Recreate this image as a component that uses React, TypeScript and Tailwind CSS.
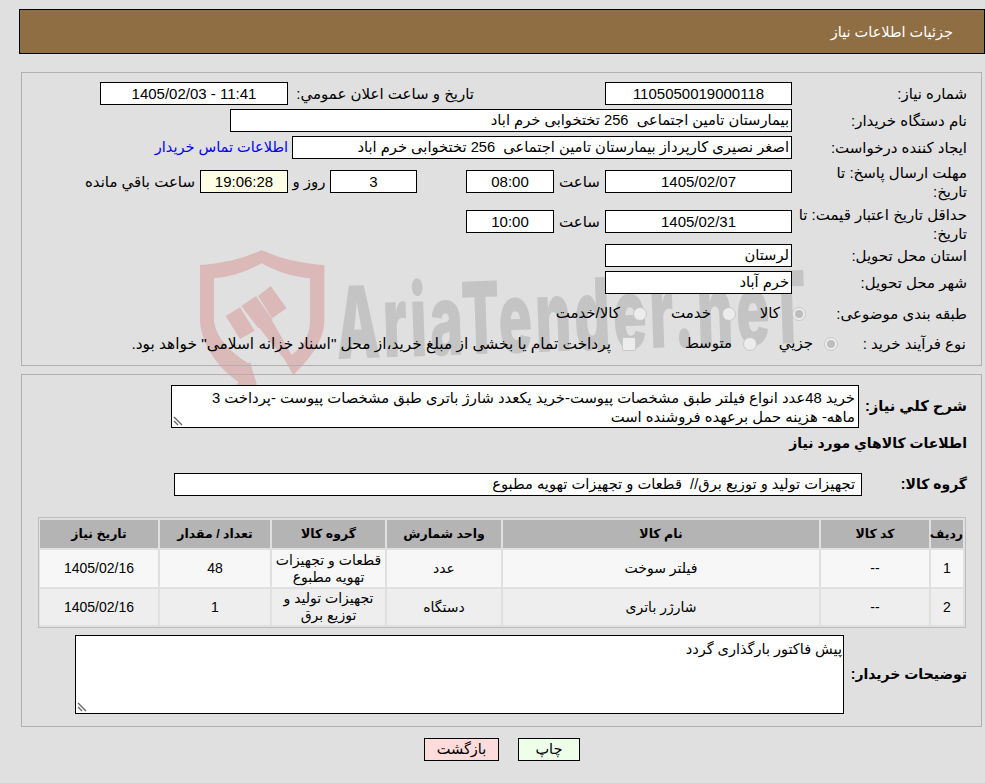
const Field = ({ w, bg = "bg-white", children, align = "text-center" }: { w: string; bg?: string; children?: React.ReactNode; align?: string }) => (
  <div className={`${w} ${bg} ${align} h-[23px] shrink-0 border border-black leading-[21px] px-[2px] whitespace-pre overflow-hidden text-[14.7px]`}>{children}</div>
);

const Label = ({ children, className = "w-[175px] leading-[21px]" }: { children: React.ReactNode; className?: string }) => (
  <div className={`${className} shrink-0 text-[15px] whitespace-nowrap`}>{children}</div>
);

const Radio = ({ on = false }: { on?: boolean }) => (
  <span className="w-[14px] h-[14px] shrink-0 rounded-full border border-[#c8c8c8] bg-[#ececec] flex items-center justify-center">
    {on && <span className="w-[8px] h-[8px] rounded-full bg-[#bdbdbd]" />}
  </span>
);

const Grip = () => (
  <svg className="absolute left-[1px] bottom-[1px]" width="11" height="11" viewBox="0 0 11 11">
    <path d="M1 2 L9 10 M1 6 L5 10" stroke="#666" strokeWidth="1.4" fill="none" />
  </svg>
);

const Num = ({ children }: { children: React.ReactNode }) => <span className="text-[15px]">{children}</span>;

const heads = ["رديف", "كد كالا", "نام كالا", "واحد شمارش", "گروه كالا", "تعداد / مقدار", "تاريخ نياز"];
const rows = [
  ["1", "--", "فیلتر سوخت", "عدد", "قطعات و تجهیزات تهویه مطبوع", "48", "1405/02/16"],
  ["2", "--", "شارژر باتری", "دستگاه", "تجهیزات تولید و توزیع برق", "1", "1405/02/16"],
];
const widths = ["w-[32px]", "w-[108px]", "w-[316px]", "w-[114px]", "w-[113px]", "w-[110px]", "w-[118px]"];

export default function App() {
  return (
    <div dir="rtl" className="relative min-h-[783px] overflow-hidden bg-[#e0e0e0] text-black font-['Liberation_Sans','DejaVu_Sans',sans-serif]">
      {/* watermark */}
      <svg className="absolute left-[190px] top-[245px]" width="150" height="150" viewBox="0 0 450 450">
        <g fill="#dbb9b9">
          <path fillRule="evenodd" d="M215 15 C280 45 340 55 403 60 L403 230 C400 290 360 340 310 390 L285 345 C335 310 358 280 360 230 L360 100 C305 95 260 80 215 55 C170 80 125 95 72 100 L72 230 C80 280 120 320 175 355 L180 350 L210 450 L125 450 L145 410 C85 370 35 300 30 230 L30 60 C90 55 150 45 215 15 Z" />
          <path d="M107 213 L150 187 L194 257 L150 283 Z M154 183 L198 153 L248 225 L205 250 Z M204 153 L242 123 L290 190 L246 220 Z" />
          <path d="M205 245 L245 225 L325 365 L310 390 L285 345 Z" />
        </g>
      </svg>
      <div dir="ltr" className="absolute left-[336px] top-[268px] -rotate-[2deg] scale-x-[0.55] [transform-origin:left_center] text-[#c4c4c4] text-[100px] leading-[110px] tracking-[0.06em] font-black whitespace-nowrap font-['Inter',sans-serif]">AriaTender.neT</div>

      <div className="relative pt-[9px]">
        <div className="ml-[19px] h-[45px] bg-[#8e6e42] border border-black text-white text-[14.5px] leading-[44px] pr-[31px]">جزئیات اطلاعات نیاز</div>

        {/* panel 1 */}
        <div className="mt-[18px] mr-[3px] ml-[21px] h-[294px] border border-[#b0b0b0] pr-[14px] pt-[9px] flex flex-col">
          <div className="flex items-center h-[23px]">
            <Label>شماره نیاز:</Label>
            <Field w="w-[187px]"><Num>1105050019000118</Num></Field>
            <Label className="mr-[131px] w-[186px] leading-[21px]">تاريخ و ساعت اعلان عمومي:</Label>
            <Field w="w-[188px]"><Num><span dir="ltr">1405/02/03 - 11:41</span></Num></Field>
          </div>
          <div className="flex items-center h-[23px] mt-[4px]">
            <Label>نام دستگاه خریدار:</Label>
            <Field w="w-[562px]" align="text-right">بیمارستان تامین اجتماعی  256 تختخوابی خرم اباد</Field>
          </div>
          <div className="flex items-center h-[23px] mt-[4px]">
            <Label>ایجاد کننده درخواست:</Label>
            <Field w="w-[500px]" align="text-right">اصغر نصیری کارپرداز بیمارستان تامین اجتماعی  256 تختخوابی خرم اباد</Field>
            <div className="mr-[4px] text-[14.5px] text-[#0000ff]">اطلاعات تماس خریدار</div>
          </div>
          <div className="flex items-start h-[36px] mt-[11px]">
            <Label className="w-[175px] -mt-[7px] leading-[19px]">مهلت ارسال پاسخ: تا<br />تاریخ:</Label>
            <Field w="w-[187px]"><Num>1405/02/07</Num></Field>
            <div className="w-[51px] text-center text-[15px] leading-[23px]">ساعت</div>
            <Field w="w-[88px]"><Num>08:00</Num></Field>
            <div className="w-[49px]" />
            <Field w="w-[87px]"><Num>3</Num></Field>
            <div className="w-[42px] text-center text-[15px] leading-[23px]">روز و</div>
            <Field w="w-[88px]" bg="bg-[#ffffe6]"><Num>19:06:28</Num></Field>
            <div className="mr-[5px] text-[15px] leading-[23px] whitespace-nowrap">ساعت باقي مانده</div>
          </div>
          <div className="flex items-start h-[34px] mt-[4px]">
            <Label className="w-[175px] -mt-[5px] leading-[19px]">حداقل تاریخ اعتبار قیمت: تا<br />تاریخ:</Label>
            <Field w="w-[187px]"><Num>1405/02/31</Num></Field>
            <div className="w-[51px] text-center text-[15px] leading-[23px]">ساعت</div>
            <Field w="w-[88px]"><Num>10:00</Num></Field>
          </div>
          <div className="flex items-center h-[23px]">
            <Label>استان محل تحویل:</Label>
            <Field w="w-[187px]" align="text-right">لرستان</Field>
          </div>
          <div className="flex items-center h-[23px] mt-[4px]">
            <Label>شهر محل تحویل:</Label>
            <Field w="w-[187px]" align="text-right">خرم آباد</Field>
          </div>
          <div className="flex items-center h-[23px] mt-[8px] text-[15px]">
            <Label className="w-[161px] leading-[21px]">طبقه بندی موضوعی:</Label>
            <Radio on />
            <span className="mr-[12px] w-[44px]">کالا</span>
            <Radio />
            <span className="mr-[11px] w-[64px]">خدمت</span>
            <Radio />
            <span className="mr-[13px] whitespace-nowrap">کالا/خدمت</span>
          </div>
          <div className="flex items-center h-[23px] mt-[7px] text-[15px]">
            <Label className="w-[129px] pr-[1px] leading-[21px]">نوع فرآیند خرید :</Label>
            <Radio on />
            <span className="mr-[11px] w-[56px]">جزيي</span>
            <Radio />
            <span className="mr-[11px] w-[96px]">متوسط</span>
            <span className="w-[14px] h-[14px] shrink-0 rounded-[2px] border border-[#c8c8c8] bg-[#ececec]" />
            <span className="mr-[11px] whitespace-nowrap text-[15.4px]">پرداخت تمام یا بخشی از مبلغ خرید،از محل "اسناد خزانه اسلامی" خواهد بود.</span>
          </div>
        </div>

        {/* panel 2 */}
        <div className="mt-[8px] mr-[3px] ml-[21px] h-[353px] border border-[#b0b0b0] pr-[14px] pt-[10px]">
          <div className="flex items-center h-[43px]">
            <div className="w-[108px] shrink-0 font-bold text-[14.7px] whitespace-nowrap">شرح كلي نياز:</div>
            <div className="relative w-[688px] h-[43px] bg-white border border-black px-[3px] pt-[3px] text-[14.8px] leading-[19px]">
              خرید 48عدد انواع فیلتر طبق مشخصات پیوست-خرید یکعدد شارژ باتری طبق مشخصات پیوست -پرداخت 3 ماهه- هزینه حمل برعهده فروشنده است
              <Grip />
            </div>
          </div>
          <div className="mt-[3px] h-[24px] font-bold text-[14px] leading-[24px]">اطلاعات كالاهاي مورد نياز</div>
          <div className="flex items-center mt-[18px] h-[23px]">
            <div className="w-[105px] shrink-0 font-bold text-[14px]">گروه كالا:</div>
            <Field w="w-[688px] pr-[6px]" align="text-right">تجهیزات تولید و توزیع برق//  قطعات و تجهیزات تهویه مطبوع</Field>
          </div>

          <div className="mt-[21px] mr-[1px] w-[928px] border border-[#bdbdbd]">
            <table className="border-separate border-spacing-[2px] table-fixed w-full text-[14px]">
              <thead>
                <tr className="h-[28px]">
                  {heads.map((h, i) => (
                    <th key={h} className={`${widths[i]} bg-[#b4b4b4] p-0 font-bold text-[12.5px]`}>{h}</th>
                  ))}
                </tr>
              </thead>
              <tbody>
                {rows.map((r, ri) => (
                  <tr key={r[0]} className={ri === 0 ? "h-[37px]" : "h-[36px]"}>
                    {r.map((c, i) => (
                      <td key={i} className={`${ri === 0 ? "bg-[#f7f7f7]" : "bg-[#eeeeee]"} p-0 text-center leading-[17px]`}>
                        {c}
                      </td>
                    ))}
                  </tr>
                ))}
              </tbody>
            </table>
          </div>

          <div className="flex items-center mt-[7px] h-[79px]">
            <div className="w-[123px] shrink-0 font-bold text-[14px] whitespace-nowrap">توضيحات خريدار:</div>
            <div className="relative w-[769px] h-[79px] bg-white border border-black px-[1px] pt-[1px] text-[14.5px] leading-[24px]">
              پیش فاکتور بارگذاری گردد
              <Grip />
            </div>
          </div>
        </div>

        {/* buttons */}
        <div className="mt-[11px] flex justify-center gap-[19px] pl-[19px]">
          <div className="w-[62px] h-[23px] bg-[#edffe8] border border-black text-center text-[14.5px] leading-[21px]">چاپ</div>
          <div className="w-[75px] h-[23px] bg-[#ffdcdc] border border-black text-center text-[14.5px] leading-[21px]">بازگشت</div>
        </div>
      </div>
    </div>
  );
}
